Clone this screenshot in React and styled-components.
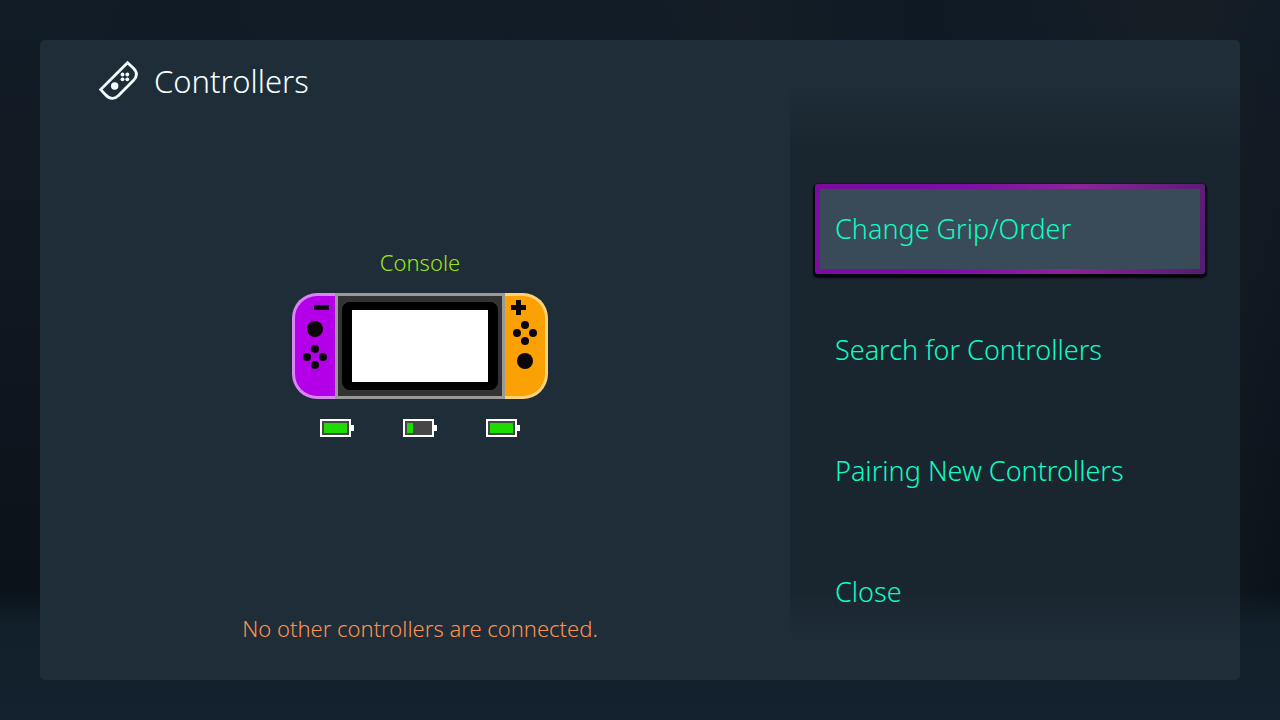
import React from "react";
import styled, { createGlobalStyle } from "styled-components";

const GlobalStyle = createGlobalStyle`
  *, *::before, *::after { box-sizing: border-box; }
  body {
    margin: 0;
    background: #12202b;
    color: #f5ffff;
    font-family: "Noto Sans", "Open Sans", sans-serif;
    font-weight: 350;
  }
`;

const Backdrop = styled.div`
  display: flex;
  min-height: 100vh;
  padding: 40px;
  background:
    linear-gradient(180deg, transparent 82%, #12202b 87%, #12222e 100%),
    linear-gradient(90deg, transparent 8%, #0c182380 13%, transparent 20%, transparent 50%, #18202680 58%, #0a162280 72%, transparent 82%, #1b202480 92%, transparent),
    linear-gradient(180deg, #121c26 0%, #111a23 20%, #0f161f 50%, #0b1219 82%);
`;

const Dialog = styled.main`
  flex: 1;
  display: grid;
  grid-template-columns: 5fr 3fr;
  border-radius: 5px;
  background: #1f2d39;
`;

const Overview = styled.section`
  display: flex;
  flex-direction: column;
  padding-bottom: 37px;
`;

const Header = styled.header`
  display: flex;
  align-items: center;
  gap: 13px;
  height: 82px;
  padding-left: 57px;
`;

const Title = styled.h1`
  margin: 0;
  font-size: 31px;
  font-weight: inherit;
  line-height: 40px;
`;

const Device = styled.div`
  flex: 1;
  display: flex;
  flex-direction: column;
  align-items: center;
  justify-content: center;
  padding: 0 0 52px 10px;
`;

const DeviceName = styled.h2`
  margin: 0 0 16px;
  color: #9be610;
  font-size: 22px;
  font-weight: inherit;
  line-height: 30px;
`;

const ConsoleArt = styled.svg`
  display: block;
  width: 256px;
  height: 106px;
`;

const Batteries = styled.div`
  display: flex;
  gap: 49px;
  margin-top: 20px;
`;

const BatteryArt = styled.svg`
  display: block;
  width: 34px;
  height: 18px;
`;

const Notice = styled.p`
  margin: 0;
  padding-left: 10px;
  color: #ff914d;
  font-size: 22px;
  line-height: 30px;
  text-align: center;
`;

const Menu = styled.nav`
  display: flex;
  flex-direction: column;
  gap: 31px;
  padding: 144px 35px 43px 25px;
  background: linear-gradient(180deg, #1a262f00 40px, #1a262f 104px, #1a262f calc(100% - 88px), #1a262f00 calc(100% - 38px));
`;

const MenuButton = styled.button`
  height: 90px;
  padding: 0 15px;
  border: 5px solid transparent;
  border-radius: 3px;
  background: ${({ $selected }) =>
    $selected
      ? "linear-gradient(#394a58, #394a58) padding-box, linear-gradient(100deg, #7b0c9e 0%, #7c0da6 35%, #8c2499 65%, #551c70 100%) border-box"
      : "none"};
  box-shadow: ${({ $selected }) => ($selected ? "0 2px 2px 2px #05040c" : "none")};
  color: #0cfcc4;
  font: inherit;
  font-size: 27px;
  line-height: 36px;
  text-align: left;
  cursor: pointer;
`;

function ControllerIcon() {
  return (
    <svg width="44" height="44" viewBox="0 0 44 44" fill="none" aria-hidden="true">
      <path
        d="M30.5 3.8 L3.7 30.6 L8.5 35.8 C12.6 40.4 17.5 40.4 21.5 36.4 L36.4 21.5 C40.4 17.4 40.4 13 36.2 8.9 Z"
        stroke="#f5ffff"
        strokeWidth="2.8"
      />
      <g fill="#f5ffff">
        <circle cx="17.7" cy="27" r="3.7" />
        <circle cx="25.5" cy="15.5" r="1.9" />
        <circle cx="30.3" cy="15.5" r="1.9" />
        <circle cx="25.5" cy="20.3" r="1.9" />
        <circle cx="30.3" cy="20.3" r="1.9" />
      </g>
    </svg>
  );
}

function PadDots({ x, y }) {
  return (
    <>
      <circle cx={x} cy={y - 8} r="4" />
      <circle cx={x - 8} cy={y} r="4" />
      <circle cx={x + 8} cy={y} r="4" />
      <circle cx={x} cy={y + 8} r="4" />
    </>
  );
}

function ConsoleDrawing() {
  return (
    <ConsoleArt viewBox="0 0 256 106" role="img" aria-label="Console with both controllers attached">
      <path d="M43 0H25A25 25 0 0 0 0 25V81A25 25 0 0 0 25 106H43Z" fill="#d887f2" />
      <path d="M43 3H25A22 22 0 0 0 3 25V81A22 22 0 0 0 25 103H43Z" fill="#b400e8" />
      <path d="M213 0H231A25 25 0 0 1 256 25V81A25 25 0 0 1 231 106H213Z" fill="#ffd278" />
      <path d="M213 3H231A22 22 0 0 1 253 25V81A22 22 0 0 1 231 103H213Z" fill="#fca104" />
      <rect x="43" width="170" height="106" fill="#999" />
      <rect x="46" y="3" width="164" height="100" fill="#333" />
      <rect x="50" y="9" width="156" height="88" rx="8" fill="#000" />
      <rect x="60" y="17" width="136" height="72" fill="#fff" />
      <g fill="#0b0609">
        <rect x="22" y="12" width="15" height="5" />
        <circle cx="23" cy="36" r="8" />
        <PadDots x={23} y={64} />
        <path d="M219 12H224V7H229V12H234V17H229V22H224V17H219Z" />
        <PadDots x={233} y={40} />
        <circle cx="233" cy="68" r="8" />
      </g>
    </ConsoleArt>
  );
}

function Battery({ charge, label }) {
  return (
    <BatteryArt viewBox="0 0 34 18" role="img" aria-label={label}>
      <rect width="31" height="18" fill="#fff" />
      <rect x="31" y="6" width="3" height="6" fill="#fff" />
      <rect x="2" y="2" width="27" height="14" fill="#464646" />
      <rect x="4" y="4" width={charge} height="10" fill="#1edc00" />
    </BatteryArt>
  );
}

const actions = ["Change Grip/Order", "Search for Controllers", "Pairing New Controllers", "Close"];

export default function App() {
  return (
    <>
      <GlobalStyle />
      <Backdrop>
        <Dialog>
          <Overview>
            <Header>
              <ControllerIcon />
              <Title>Controllers</Title>
            </Header>
            <Device>
              <DeviceName>Console</DeviceName>
              <ConsoleDrawing />
              <Batteries>
                <Battery charge={23} label="Left controller battery full" />
                <Battery charge={6} label="Console battery low" />
                <Battery charge={23} label="Right controller battery full" />
              </Batteries>
            </Device>
            <Notice>No other controllers are connected.</Notice>
          </Overview>
          <Menu aria-label="Controller actions">
            {actions.map((action, index) => (
              <MenuButton key={action} type="button" $selected={index === 0}>
                {action}
              </MenuButton>
            ))}
          </Menu>
        </Dialog>
      </Backdrop>
    </>
  );
}
